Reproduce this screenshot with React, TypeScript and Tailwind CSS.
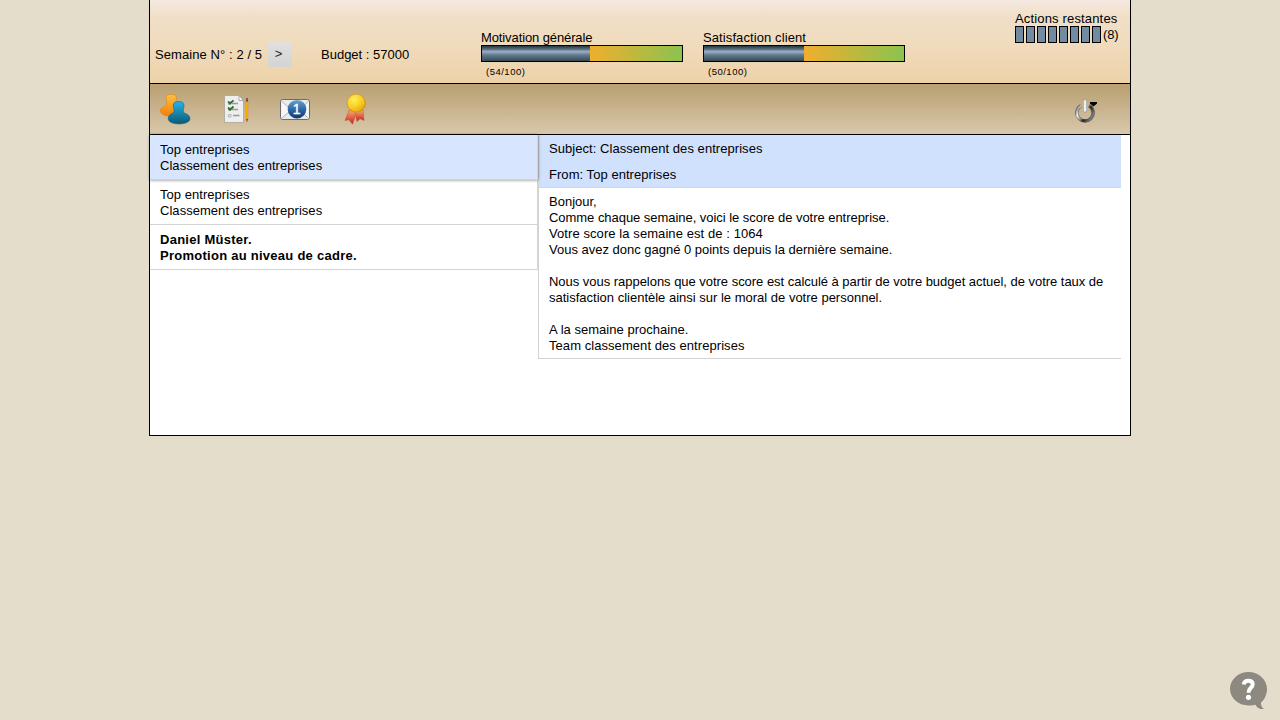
import type { ReactNode } from 'react';

const segments = [0, 1, 2, 3, 4, 5, 6, 7];

function TeamIcon() {
  return (
    <svg width="32" height="32" viewBox="0 0 32 32" className="block">
      <defs>
        <linearGradient id="orange" x1="0" y1="0" x2="0" y2="1">
          <stop offset="0" stopColor="#fcc145" />
          <stop offset="1" stopColor="#f57f05" />
        </linearGradient>
        <linearGradient id="blue" x1="0" y1="0" x2="0" y2="1">
          <stop offset="0" stopColor="#27b4e6" />
          <stop offset="1" stopColor="#0d5875" />
        </linearGradient>
      </defs>
      <path d="M7 5C7 2.300 9 1.300 12.200 1.300S17.400 2.300 17.400 5C17.400 7.500 16.800 9 16.800 12C17 14 20 14 20 18.500C20 21.500 16 23 11 23S1.300 21 1.300 17.500C1.300 13.500 7.500 13.500 7.800 11.500C7.800 9 7 7.500 7 5Z" fill="url(#orange)" stroke="#d9820c" strokeWidth=".6" />
      <path d="M14.300 12.500C14.300 9.600 16.400 8.600 19.600 8.600S25 9.600 25 12.500C25 15 24.200 16 24.200 18.500C24.600 20.800 31 20.800 31 25.600C31 29.200 26 30.900 20 30.900S9.200 29.200 9.200 25.600C9.200 20.800 14.700 20.800 15.100 18.500C15.100 16 14.300 15 14.300 12.500Z" fill="url(#blue)" stroke="#0b6587" strokeWidth=".6" />
    </svg>
  );
}

function TasksIcon() {
  return (
    <svg width="32" height="32" viewBox="0 0 32 32" className="block">
      <path d="M5.500 2.500H20L24.500 7.500V29.500H5.500Z" fill="#eeeeee" stroke="#aaa59b" strokeWidth=".8" />
      <path d="M20 2.500V7.500H24.500Z" fill="#fff" stroke="#999" strokeWidth=".8" />
      <path d="M13 10.500H19M13 16.500H19M14 22.500H20.500" stroke="#999" strokeWidth="1.300" />
      <path d="M9.500 9H12V11.500H9.500ZM9.500 15H12V17.500H9.500ZM9.500 21.500H12V24H9.500Z" fill="#e8e8e8" stroke="#999" strokeWidth=".6" />
      <path d="M9 8.500L11 10.500L14.500 7.300M9 14.700L11 16.700L14.500 13.500" fill="none" stroke="#286827" strokeWidth="1.700" />
      <path d="M27 8H29V26H27Z" fill="#ffb10e" stroke="#d58b00" strokeWidth=".4" />
      <path d="M27 5H29V7H27Z" fill="#b6484b" />
      <path d="M27 7H29V8.500H27Z" fill="#41566d" />
      <path d="M27 26H29L28 29.500Z" fill="#7a4a20" />
    </svg>
  );
}

function MailIcon() {
  return (
    <svg width="32" height="32" viewBox="0 0 32 32" className="block">
      <defs>
        <linearGradient id="badge" x1="0" y1="0" x2="0" y2="1">
          <stop offset="0" stopColor="#6aa3cb" />
          <stop offset=".5" stopColor="#2e6ba8" />
          <stop offset="1" stopColor="#10366f" />
        </linearGradient>
      </defs>
      <rect x="1.500" y="6.500" width="29" height="20" rx="2" fill="#e9eaeb" stroke="#6e6b68" />
      <path d="M2.500 8L12 17L2.500 25.500M29.500 8L21 17L29.500 25.500" fill="#f8f8f8" stroke="#aaa" strokeWidth=".9" />
      <circle cx="18" cy="16.200" r="9.300" fill="url(#badge)" />
      <text x="17.600" y="21.200" textAnchor="middle" fill="#fff" stroke="#fff" strokeWidth=".4" fontFamily="Liberation Sans, sans-serif" fontSize="14">1</text>
    </svg>
  );
}

function MedalIcon() {
  return (
    <svg width="32" height="32" viewBox="0 0 32 32" className="block">
      <defs>
        <radialGradient id="gold" cx=".38" cy=".32" r=".68">
          <stop offset="0" stopColor="#fff05a" />
          <stop offset=".65" stopColor="#f8c81c" />
          <stop offset="1" stopColor="#dc9804" />
        </radialGradient>
        <linearGradient id="ribbon" x1="0" y1="0" x2="0" y2="1">
          <stop offset="0" stopColor="#f8ac78" />
          <stop offset="1" stopColor="#c91e16" />
        </linearGradient>
      </defs>
      <path d="M10 17L6 27.500L10 26.800L13.500 31.300L17.500 19.500Z" fill="url(#ribbon)" stroke="#b64a30" strokeWidth=".4" />
      <path d="M15.500 18L18 28.500L21 25.700L25 27.500L24 17Z" fill="url(#ribbon)" stroke="#b64a30" strokeWidth=".4" />
      <circle cx="17.300" cy="10.200" r="9.200" fill="url(#gold)" stroke="#d0982e" strokeWidth=".8" />
      <circle cx="17.300" cy="10.200" r="7.200" fill="none" stroke="#ffe35c" strokeWidth=".7" opacity=".6" />
    </svg>
  );
}

function PowerIcon() {
  return (
    <svg width="24" height="24" viewBox="0 0 24 24" className="block">
      <defs>
        <linearGradient id="ring" x1="0" y1="0" x2="1" y2=".55">
          <stop offset="0" stopColor="#666" />
          <stop offset=".3" stopColor="#f2f2f2" />
          <stop offset=".55" stopColor="#888" />
          <stop offset=".7" stopColor="#222" />
          <stop offset="1" stopColor="#777" />
        </linearGradient>
      </defs>
      <path d="M6 6.800A8.100 8.100 0 1 0 14 6.800" fill="none" stroke="#5b5750" strokeWidth="3.400" />
      <path d="M6 6.800A8.100 8.100 0 1 0 14 6.800" fill="none" stroke="url(#ring)" strokeWidth="2.300" />
      <path d="M10 2.500V11.500" stroke="#8d8b88" strokeWidth="4" strokeLinecap="round" />
      <path d="M10 2.500V11.500" stroke="#eeeff1" strokeWidth="2.800" strokeLinecap="round" />
      <path d="M15 3H22V4.500L18.500 7.500L15 4.500Z" fill="#000" />
    </svg>
  );
}

function Gauge({ label, value, fill, tracking }: { label: string; value: string; fill: string; tracking: string }) {
  return (
    <div className="w-[202px]">
      <div className={'h-[15px] leading-[15px] ' + tracking}>{label}</div>
      <div className="flex h-[17px] border border-black">
        <div className={'h-full bg-[linear-gradient(to_bottom,#223842_0%,#536a7a_20%,#9fafc5_38%,#8b9db4_45%,#627a8c_60%,#344b58_100%)] ' + fill} />
        <div className="h-full grow bg-linear-to-r/srgb from-[#f0ae2d] to-[#8bc34f]" />
      </div>
      <div className="pt-1 pl-[5px] text-[9.5px] leading-3 tracking-[0.5px]">{value}</div>
    </div>
  );
}

function Message({ children, className }: { children: ReactNode; className: string }) {
  return <div className={'h-[45px] border-r border-b border-[#d3d3d3] px-2.5 pt-[7px] ' + className}>{children}</div>;
}

export default function App() {
  return (
    <div className="relative h-[720px] overflow-hidden bg-[#e4ddcb] pl-[149px] font-['Liberation_Sans',Arial,sans-serif] text-[13px] leading-4 text-black">
      <main className="h-[436px] w-[982px] border-x border-b border-black bg-white">
        <header className="flex h-[84px] border-b border-black bg-[linear-gradient(to_bottom,#f5e9e1_0px,#f1dfc8_16px,#f0dbbc_45px,#edd2a8_83px)] pl-[5px]">
          <div className="flex w-[166px] items-start pt-[41px]">
            <span className="w-[113px] pt-1.5 tracking-[0.08px]">Semaine N° : 2 / 5</span>
            <button className="flex h-[26px] w-6 shrink-0 items-center justify-center rounded-[3px] bg-linear-to-b from-[#e1e1e1] to-[#d3d3d3] pr-[3px] text-[#29202c]">&gt;</button>
          </div>
          <div className="w-[160px] pt-[47px]">Budget : 57000</div>
          <div className="flex gap-5 pt-[30px]">
            <Gauge label="Motivation générale" value="(54/100)" fill="w-[54%]" tracking="tracking-[-0.11px]" />
            <Gauge label="Satisfaction client" value="(50/100)" fill="w-[50%]" tracking="tracking-[0.1px]" />
          </div>
          <div className="ml-auto w-[115px] pt-[11px]">
            <div className="h-[15px] leading-[15px] tracking-[0.16px] whitespace-nowrap">Actions restantes</div>
            <div className="flex gap-0.5">
              {segments.map((id) => (
                <div key={id} className="h-[17px] w-[9px] border border-black bg-[#738ba1]" />
              ))}
              <span className="leading-[17px] tracking-[-0.2px]">(8)</span>
            </div>
          </div>
        </header>
        <nav className="flex h-[51px] items-start border-b border-black bg-linear-to-b from-[#b99f71] to-[#d8c8ab] pt-[9px] pl-[9px]">
          <div className="flex gap-7">
            <TeamIcon />
            <TasksIcon />
            <MailIcon />
            <MedalIcon />
          </div>
          <div className="mt-1.5 mr-[31px] ml-auto"><PowerIcon /></div>
        </nav>
        <div className="flex items-start">
          <section className="w-[388px]">
            <Message className="relative bg-[#d7e6fe] tracking-[0.04px] shadow-[0_0_3px_rgba(0,0,0,0.55)]">Top entreprises<br />Classement des entreprises</Message>
            <Message className="tracking-[0.04px]">Top entreprises<br />Classement des entreprises</Message>
            <Message className="font-bold tracking-[0.26px]">Daniel Müster.<br />Promotion au niveau de cadre.</Message>
          </section>
          <article className="w-[583px] border-b border-l border-[#d3d3d3]">
            <div className="border-b border-[#d3d3d3] bg-[#cfe1fd] tracking-[0.05px]">
              <div className="px-2.5 pt-1.5 pb-1">Subject: Classement des entreprises</div>
              <div className="px-2.5 pt-1.5 pb-1">From: Top entreprises</div>
            </div>
            <div className="px-2.5 pt-1.5 pb-1 whitespace-nowrap">
              <p>Bonjour,</p>
              <p className="tracking-[-0.04px]">Comme chaque semaine, voici le score de votre entreprise.</p>
              <p className="tracking-[0.08px]">Votre score la semaine est de : 1064</p>
              <p className="tracking-[-0.01px]">Vous avez donc gagné 0 points depuis la dernière semaine.</p>
              <br />
              <p className="tracking-[-0.03px]">Nous vous rappelons que votre score est calculé à partir de votre budget actuel, de votre taux de</p>
              <p>satisfaction clientèle ainsi sur le moral de votre personnel.</p>
              <br />
              <p className="tracking-[0.03px]">A la semaine prochaine.</p>
              <p className="tracking-[0.06px]">Team classement des entreprises</p>
            </div>
          </article>
        </div>
      </main>
      <button aria-label="?" className="absolute right-3 bottom-[9px]">
        <svg width="38" height="40" viewBox="0 0 38 40" className="block">
          <path d="M18.500 1C8.500 1 0 8.500 0 17.800S8 34.500 18.500 34.500C21.500 34.500 24 34.300 25.500 33.800C27 36.500 29 38.500 34 38C31.500 36.500 30.800 34 31 31.500C35 28.500 37 22.500 37 17.800C37 8.500 28.500 1 18.500 1Z" fill="#8d8980" />
          <path d="M13.700 13.500C14 10.400 15.700 9.700 18.300 9.700C21.300 9.700 22.700 11 22.700 13.300C22.700 17 18.500 16.700 18.500 21.800" fill="none" stroke="#fff" strokeWidth="4" />
          <circle cx="18.500" cy="26.300" r="2.600" fill="#fff" />
        </svg>
      </button>
    </div>
  );
}
